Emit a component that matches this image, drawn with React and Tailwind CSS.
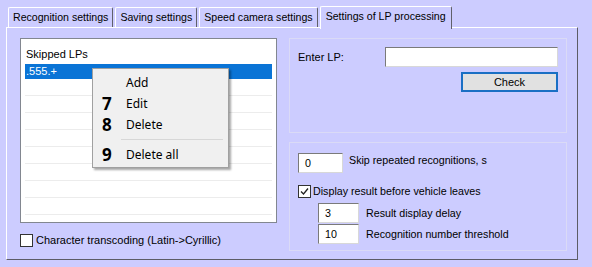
import React from 'react';

const tabs = ['Recognition settings', 'Saving settings', 'Speed camera settings'];
const menu = [
  { n: '', label: 'Add' },
  { n: '7', label: 'Edit' },
  { n: '8', label: 'Delete' },
];

const Box = ({ value, className = '' }) => (
  <div className={`h-[20px] bg-white border border-[#7a7a7a] border-r-[#d8d8d8] border-b-[#d8d8d8] px-[6px] flex items-center ${className}`}>
    {value}
  </div>
);

const Check = ({ checked }) => (
  <div className="w-[13px] h-[13px] bg-white border border-[#333] flex items-center justify-center">
    {checked && (
      <svg width="11" height="11" viewBox="0 0 11 11">
        <path d="M2 5.5 L4.5 8 L9 2.5" fill="none" stroke="#222" strokeWidth="1.3" />
      </svg>
    )}
  </div>
);

export default function App() {
  return (
    <div
      className="w-[592px] h-[267px] bg-[#ccccff] text-[11px] text-black overflow-hidden"
      style={{ fontFamily: '"Liberation Sans", Arial, sans-serif' }}
    >
      {/* tab strip */}
      <div className="flex items-end pl-[8px] pt-[6px] h-[27px] text-[10.6px]">
        {tabs.map((t) => (
          <div
            key={t}
            className="h-[20px] mr-[2px] px-[4px] flex items-center border-l border-t border-l-white border-t-white border-r border-r-[#60606a] rounded-t-[2px]"
          >
            {t}
          </div>
        ))}
        <div className="relative z-10 h-[23px] -mb-[2px] px-[5px] pb-[3px] flex items-center bg-[#ccccff] border-l border-t border-l-white border-t-white border-r border-r-[#60606a] rounded-t-[2px]">
          Settings of LP processing
        </div>
      </div>

      {/* tab page */}
      <div className="ml-[6px] w-[572px] h-[233px] border border-l-white border-t-white border-r-[#5c5c66] border-b-[#5c5c66] pl-[13px] pt-[10px] flex gap-[12px]">
        {/* left column */}
        <div className="w-[257px] flex flex-col">
          <div className="relative h-[185px] bg-white border border-[#828790] overflow-visible">
            <div className="h-[25px] pl-[5px] flex items-end pb-[2px]">Skipped LPs</div>
            <div className="mx-[4px] h-[15px] bg-[#0a74d6] text-white pl-[1px] flex items-center">.555.+</div>
            {Array.from({ length: 8 }).map((_, i) => (
              <div key={i} className="mx-[4px] h-[17px] border-b border-[#ececec]" />
            ))}

            {/* context menu */}
            <div
              className="absolute left-[71px] top-[29px] w-[137px] h-[100px] bg-[#f0f0f0] border border-[#a0a0a0] shadow-[2px_2px_2px_rgba(0,0,0,0.35)] pt-[3px] text-[12px]"
              style={{ fontFamily: '"Noto Sans", "Open Sans", sans-serif' }}
            >
              {menu.map((m) => (
                <div key={m.label} className="h-[21px] flex items-center">
                  <span className="w-[33px] pl-[9px] text-[17px] font-bold leading-none">{m.n}</span>
                  <span>{m.label}</span>
                </div>
              ))}
              <div className="ml-[28px] mr-[5px] my-[4px] border-t border-[#d7d7d7]" />
              <div className="h-[21px] flex items-center">
                <span className="w-[33px] pl-[9px] text-[17px] font-bold leading-none">9</span>
                <span>Delete all</span>
              </div>
            </div>
          </div>
          <div className="flex items-center gap-[3px] mt-[9px]">
            <Check />
            <span>Character transcoding (Latin-&gt;Cyrillic)</span>
          </div>
        </div>

        {/* right column */}
        <div className="w-[278px] flex flex-col gap-[9px]">
          <div className="h-[95px] border border-[#dadaf6] pl-[8px] pr-[8px] pt-[8px]">
            <div className="flex items-center">
              <span className="w-[87px]">Enter LP:</span>
              <Box value="" className="w-[174px]" />
            </div>
            <div className="flex justify-end mt-[5px]">
              <div className="w-[97px] h-[20px] bg-[#e1e1e1] border-2 border-[#1a6fc4] flex items-center justify-center">
                Check
              </div>
            </div>
          </div>
          <div className="h-[109px] border border-[#dadaf6] pl-[8px] pt-[10px] text-[10.7px]">
            <div className="flex items-start">
              <Box value="0" className="w-[45px]" />
              <span className="ml-[6px] -mt-[1px]">Skip repeated recognitions, s</span>
            </div>
            <div className="flex items-center gap-[2px] mt-[10px]">
              <Check checked />
              <span>Display result before vehicle leaves</span>
            </div>
            <div className="flex items-center mt-[4px] pl-[20px]">
              <Box value="3" className="w-[41px]" />
              <span className="ml-[7px]">Result display delay</span>
            </div>
            <div className="flex items-center mt-[1px] pl-[20px]">
              <Box value="10" className="w-[41px]" />
              <span className="ml-[7px]">Recognition number threshold</span>
            </div>
          </div>
        </div>
      </div>
    </div>
  );
}
